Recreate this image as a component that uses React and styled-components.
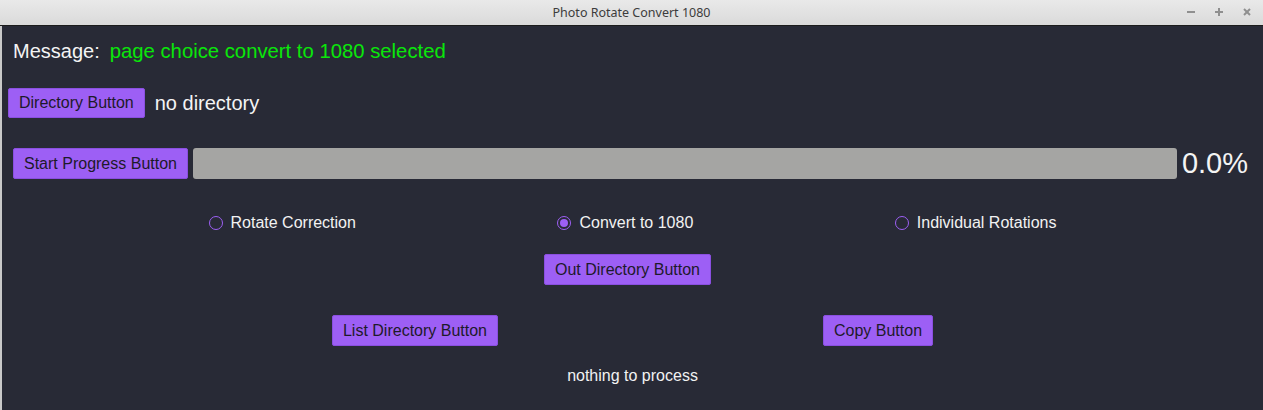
import styled, { createGlobalStyle } from "styled-components";

const GlobalStyle = createGlobalStyle`
  html, body {
    margin: 0;
    padding: 0;
    background: #c9c9c9;
  }
  body {
    font-family: "Liberation Sans", Arial, sans-serif;
  }
`;

const PURPLE = "#9d5ff5";

const App = () => {
  return (
    <>
      <GlobalStyle />
      <Window>
        <TitleBar>
          <Title>Photo Rotate Convert 1080</Title>
          <Controls>
            <CtrlIcon viewBox="0 0 10 10">
              <line x1="1" y1="5" x2="9" y2="5" />
            </CtrlIcon>
            <CtrlIcon viewBox="0 0 10 10">
              <line x1="1" y1="5" x2="9" y2="5" />
              <line x1="5" y1="1" x2="5" y2="9" />
            </CtrlIcon>
            <CtrlIcon viewBox="0 0 10 10">
              <line x1="2" y1="2" x2="8" y2="8" />
              <line x1="8" y1="2" x2="2" y2="8" />
            </CtrlIcon>
          </Controls>
        </TitleBar>

        <Content>
          <MessageRow>
            <Label>Message:</Label>
            <Status>page choice convert to 1080 selected</Status>
          </MessageRow>

          <DirRow>
            <Button h={30}>Directory Button</Button>
            <Label>no directory</Label>
          </DirRow>

          <ProgressRow>
            <Button>Start Progress Button</Button>
            <Bar />
            <Percent>0.0%</Percent>
          </ProgressRow>

          <RadioRow>
            <RadioItem>
              <Circle />
              <span>Rotate Correction</span>
            </RadioItem>
            <RadioItem>
              <Circle checked />
              <span>Convert to 1080</span>
            </RadioItem>
            <RadioItem>
              <Circle />
              <span>Individual Rotations</span>
            </RadioItem>
          </RadioRow>

          <CenterRow>
            <Button>Out Directory Button</Button>
          </CenterRow>

          <SpreadRow>
            <Button>List Directory Button</Button>
            <Button>Copy Button</Button>
          </SpreadRow>

          <Footer>nothing to process</Footer>
        </Content>
      </Window>
    </>
  );
};

export default App;

const Window = styled.div`
  margin-left: 2px;
  width: 1261px;
  height: 410px;
  display: flex;
  flex-direction: column;
  background: #282a36;
`;

const TitleBar = styled.div`
  height: 25px;
  flex-shrink: 0;
  display: flex;
  align-items: center;
  justify-content: center;
  position: relative;
  background: linear-gradient(#e9e9e9, #dadada);
  border-bottom: 1px solid #1c1c1c;
  margin-left: -2px;
  width: 1263px;
`;

const Title = styled.div`
  font-family: "Noto Sans", "DejaVu Sans", sans-serif;
  font-size: 12.5px;
  color: #3c3c3c;
`;

const Controls = styled.div`
  position: absolute;
  right: 11px;
  top: 7px;
  display: flex;
  gap: 18px;
`;

const CtrlIcon = styled.svg`
  width: 10px;
  height: 10px;
  stroke: #8f8f8f;
  stroke-width: 2;
`;

const Content = styled.div`
  display: flex;
  flex-direction: column;
  padding: 14px 5px 0 5px;
  color: #f2f2f2;
`;

const MessageRow = styled.div`
  display: flex;
  align-items: center;
  gap: 10px;
  padding-left: 6px;
  height: 23px;
`;

const Label = styled.span`
  font-size: 20px;
  color: #f4f4f4;
`;

const Status = styled.span`
  font-size: 20.3px;
  color: #0ae60a;
`;

const DirRow = styled.div`
  display: flex;
  align-items: center;
  gap: 10px;
  margin-top: 25px;
  padding-left: 1px;
`;

const Button = styled.button`
  height: ${({ h }) => h || 31}px;
  padding: 0 10px;
  background: ${PURPLE};
  border: 1px solid #8a4fe0;
  border-radius: 2px;
  color: #1d1a2a;
  font-family: "Liberation Sans", Arial, sans-serif;
  font-size: 16px;
  white-space: nowrap;
  flex-shrink: 0;
`;

const ProgressRow = styled.div`
  display: flex;
  align-items: center;
  gap: 5px;
  margin-top: 29px;
  padding-left: 6px;
`;

const Bar = styled.div`
  flex: 1;
  height: 31px;
  background: #a5a5a3;
  border-radius: 3px;
`;

const Percent = styled.span`
  font-size: 29px;
  color: #f4f4f4;
  margin-right: 10px;
`;

const RadioRow = styled.div`
  display: flex;
  justify-content: space-evenly;
  align-items: center;
  height: 20px;
  margin-top: 33px;
`;

const RadioItem = styled.label`
  display: flex;
  align-items: center;
  gap: 8px;
  font-size: 16px;
  color: #f2f2f2;
`;

const Circle = styled.span`
  width: 12px;
  height: 12px;
  border: 1.5px solid ${PURPLE};
  border-radius: 50%;
  display: flex;
  align-items: center;
  justify-content: center;
  &::after {
    content: "";
    width: 8px;
    height: 8px;
    border-radius: 50%;
    background: ${PURPLE};
    display: ${({ checked }) => (checked ? "block" : "none")};
  }
`;

const CenterRow = styled.div`
  display: flex;
  justify-content: center;
  margin-top: 21px;
  padding-right: 10px;
`;

const SpreadRow = styled.div`
  display: flex;
  justify-content: space-evenly;
  margin-top: 30px;
`;

const Footer = styled.div`
  text-align: center;
  font-size: 16px;
  margin-top: 21px;
  color: #f2f2f2;
`;
